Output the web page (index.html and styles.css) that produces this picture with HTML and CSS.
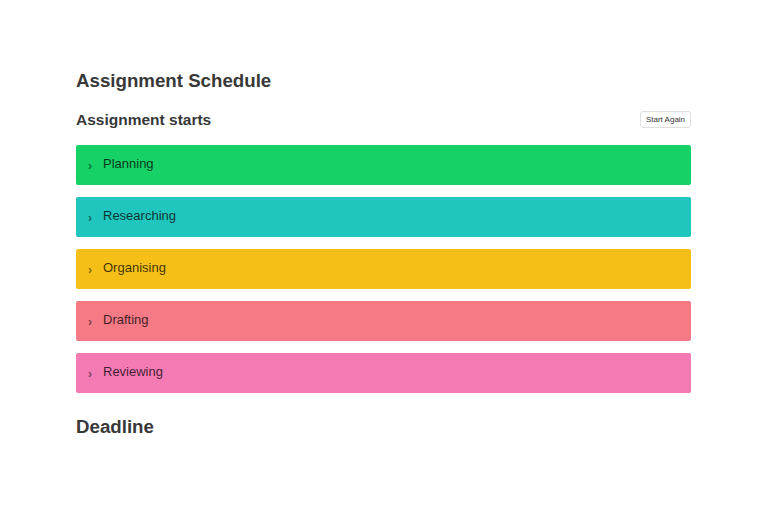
FILE: index.html
```html
<!DOCTYPE html>
<html>
<head>
<meta charset="utf-8">
<link rel="stylesheet" href="styles.css">
</head>
<body>
<div class="page">
  <h1 class="title">Assignment Schedule</h1>
  <div class="subhead">
    <h2 class="sub">Assignment starts</h2>
    <button class="btn">Start Again</button>
  </div>
  <div class="stages">
    <div class="stage green"><span class="chev">›</span><span class="label">Planning</span></div>
    <div class="stage teal"><span class="chev">›</span><span class="label">Researching</span></div>
    <div class="stage yellow"><span class="chev">›</span><span class="label">Organising</span></div>
    <div class="stage red"><span class="chev">›</span><span class="label">Drafting</span></div>
    <div class="stage pink"><span class="chev">›</span><span class="label">Reviewing</span></div>
  </div>
  <h1 class="title deadline">Deadline</h1>
</div>
</body>
</html>
```
FILE: styles.css
```css
html, body { margin: 0; padding: 0; background: #fff; }
body { font-family: "Liberation Sans", Arial, sans-serif; color: #333; }
.page { width: 615px; margin-left: 76px; padding-top: 69px; }
.title { font-size: 18.7px; font-weight: bold; margin: 0; line-height: 24px; color: #383838; }
.subhead { display: flex; justify-content: space-between; align-items: flex-start; margin-top: 17px; height: 20px; }
.sub { font-size: 15.5px; font-weight: bold; margin: 0; line-height: 20px; color: #383838; }
.btn { font-family: "Liberation Sans", Arial, sans-serif; font-size: 8px; color: #333; background: #fff; border: 1px solid #e0e0e0; border-radius: 3px; height: 17px; width: 51px; padding: 0; margin-top: 1px; }
.stages { display: flex; flex-direction: column; gap: 12px; margin-top: 15px; }
.stage { height: 40px; border-radius: 2px; display: flex; align-items: center; padding-left: 12px; box-sizing: border-box; font-size: 13px; }
.chev { width: 15px; font-size: 12px; font-weight: bold; color: rgba(0,0,0,0.5); position: relative; top: 1px; }
.label { color: rgba(0,0,0,0.75); position: relative; top: -1.5px; }
.green { background: #15d166; }
.teal { background: #20c5bd; }
.yellow { background: #f5bf18; }
.red { background: #f47a86; }
.pink { background: #f47ab4; }
.deadline { margin-top: 22px; }
```
